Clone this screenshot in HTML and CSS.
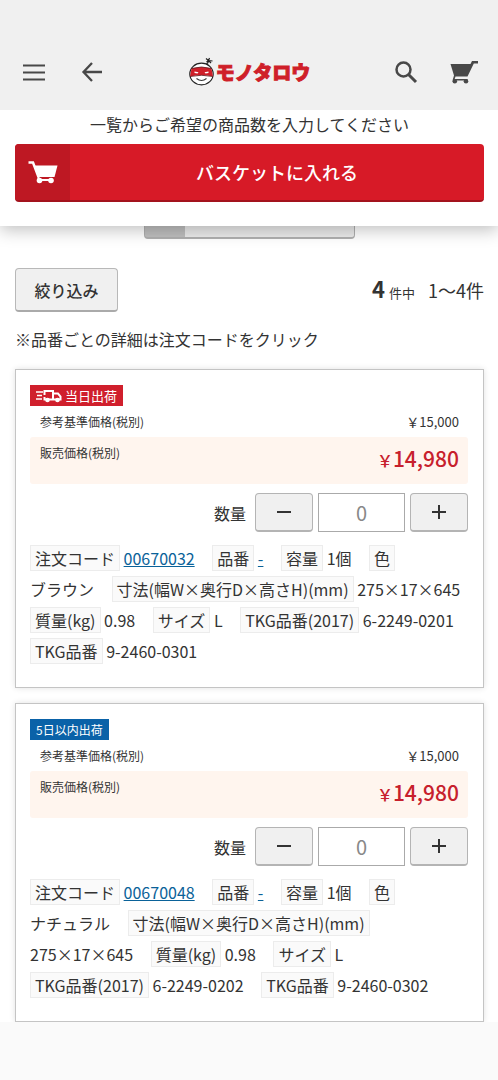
FILE: index.html
```html
<!DOCTYPE html>
<html lang="ja">
<head>
<meta charset="utf-8">
<meta name="viewport" content="width=device-width, initial-scale=1">
<title>モノタロウ</title>
<link rel="stylesheet" href="styles.css">
</head>
<body>
<header class="header">
  <div class="header-side">
    <button class="icon-button" type="button" aria-label="メニュー">
      <svg width="24" height="24" viewBox="0 0 24 24"><path d="M1 5.500H23M1 12.500H23M1 19.500H23" stroke="#484848" stroke-width="2.200" fill="none"/></svg>
    </button>
    <button class="icon-button" type="button" aria-label="戻る">
      <svg width="24" height="24" viewBox="0 0 24 24"><path d="M22 12H3.500M12 3L3.500 12L12 21" stroke="#484848" stroke-width="2.300" fill="none"/></svg>
    </button>
  </div>
  <a class="logo" href="#">
    <svg width="28" height="32" viewBox="0 0 28 32" aria-hidden="true">
      <ellipse cx="13.500" cy="18" rx="11.700" ry="10.800" fill="#fff" stroke="#222" stroke-width="1.200"/>
      <path d="M3.500 12.500Q13.500 9.500 23.500 12.500L25 20.500Q13.500 18 2 20.500Z" fill="#cf1f29"/>
      <path d="M6.500 15.500L10.500 16.300L9.500 17.500L6.500 17ZM16.500 16.300L20.500 15.500L20.500 17L17.500 17.500Z" fill="#fff"/>
      <path d="M3.500 12.500Q13.500 9.500 23.500 12.500M2 20.500Q13.500 18 25 20.500" fill="none" stroke="#5a1a1e" stroke-width=".800"/>
      <path d="M8.500 22.500Q13.500 26.500 18.500 22.500" fill="none" stroke="#333" stroke-width="1.100"/>
      <path d="M18.500 8Q20.500 7 20.500 4.500M18 2.500L20.500 4.500L18.500 6M20.500 4.500L21.500 2M20.500 4.500L24.500 5M20.500 4.500L23 7" fill="none" stroke="#222" stroke-width="1.200"/>
    </svg>
    <span class="logo-text">モノタロウ</span>
  </a>
  <div class="header-side">
    <button class="icon-button" type="button" aria-label="検索">
      <svg width="24" height="24" viewBox="0 0 24 24"><circle cx="9.500" cy="9.500" r="7" fill="none" stroke="#484848" stroke-width="2.500"/><path d="M14.500 14.500L22 22" stroke="#484848" stroke-width="3"/></svg>
    </button>
    <button class="icon-button" type="button" aria-label="バスケット">
      <svg width="28" height="24" viewBox="0 0 28 24"><path d="M.500 4H20.500L22 1H28V3.500H23.800L17.500 16.500H5.500L4.700 19H17.500V20.500H2.500L4 15.500Z" fill="#484848"/><circle cx="4.800" cy="21.300" r="2.300" fill="#484848"/><circle cx="16" cy="21.300" r="2.300" fill="#484848"/></svg>
    </button>
  </div>
</header>

<section class="basket-bar">
  <p class="basket-note">一覧からご希望の商品数を入力してください</p>
  <button class="basket-button" type="button">
    <span class="basket-icon">
      <svg width="30" height="24" viewBox="0 0 30 24"><path d="M.500 2.500H5L10.500 17" fill="none" stroke="#fff" stroke-width="2.500"/><path d="M6 5.500H29.500L26.500 17H10Z" fill="#fff"/><path d="M10.500 16V20H24" fill="none" stroke="#fff" stroke-width="2"/><circle cx="11.500" cy="20.500" r="2.800" fill="#fff"/><circle cx="23" cy="20.500" r="2.800" fill="#fff"/></svg>
    </span>
    <span class="basket-label">バスケットに入れる</span>
  </button>
</section>

<main class="content">
  <button class="under-button" type="button" aria-label="開く"></button>
  <div class="list-head">
    <button class="filter-button" type="button">絞り込み</button>
    <p class="count"><strong class="count-total">4</strong><span class="count-unit">件中</span><span>1〜4件</span></p>
  </div>
  <p class="list-note">※品番ごとの詳細は注文コードをクリック</p>

  <article class="card">
    <p class="badge badge-today">
      <svg width="26" height="14" viewBox="0 0 26 14" aria-hidden="true"><path d="M0 3H7M1 6.500H6M0 10H6" stroke="#fff" stroke-width="1.500"/><path d="M8.500 6V2H17V10.500H8.500V8M17 4.500H22L24.500 7.500V10.500H17" fill="none" stroke="#fff" stroke-width="2"/><circle cx="11.500" cy="11" r="2.300" fill="#fff"/><circle cx="21.500" cy="11" r="2.300" fill="#fff"/></svg>
      当日出荷
    </p>
    <div class="price-row"><span>参考基準価格(税別)</span><span class="list-price">&#65509;15,000</span></div>
    <div class="price-row sale-row"><span>販売価格(税別)</span><span class="sale-price"><span class="yen">&#65509;</span>14,980</span></div>
    <div class="quantity">
      <label class="quantity-label" for="qty-1">数量</label>
      <button class="step-button" type="button" aria-label="減らす"><svg width="16" height="16" viewBox="0 0 16 16"><path d="M1 8H15" stroke="#333" stroke-width="2"/></svg></button>
      <input class="quantity-input" id="qty-1" type="text" inputmode="numeric" placeholder="0">
      <button class="step-button" type="button" aria-label="増やす"><svg width="16" height="16" viewBox="0 0 16 16"><path d="M1 8H15M8 1V15" stroke="#333" stroke-width="2"/></svg></button>
    </div>
    <div class="specs">
      <span class="term">注文コード</span> <span class="value"><a href="#">00670032</a></span>
      <span class="term">品番</span> <span class="value"><a href="#">-</a></span>
      <span class="term">容量</span> <span class="value">1個</span>
      <span class="term">色</span> <span class="value">ブラウン</span>
      <span class="term">寸法(幅W×奥行D×高さH)(mm)</span> <span class="value">275×17×645</span>
      <span class="term">質量(kg)</span> <span class="value">0.98</span>
      <span class="term">サイズ</span> <span class="value">L</span>
      <span class="term">TKG品番(2017)</span> <span class="value">6-2249-0201</span>
      <span class="term">TKG品番</span> <span class="value">9-2460-0301</span>
    </div>
  </article>

  <article class="card">
    <p class="badge badge-days">5日以内出荷</p>
    <div class="price-row"><span>参考基準価格(税別)</span><span class="list-price">&#65509;15,000</span></div>
    <div class="price-row sale-row"><span>販売価格(税別)</span><span class="sale-price"><span class="yen">&#65509;</span>14,980</span></div>
    <div class="quantity">
      <label class="quantity-label" for="qty-2">数量</label>
      <button class="step-button" type="button" aria-label="減らす"><svg width="16" height="16" viewBox="0 0 16 16"><path d="M1 8H15" stroke="#333" stroke-width="2"/></svg></button>
      <input class="quantity-input" id="qty-2" type="text" inputmode="numeric" placeholder="0">
      <button class="step-button" type="button" aria-label="増やす"><svg width="16" height="16" viewBox="0 0 16 16"><path d="M1 8H15M8 1V15" stroke="#333" stroke-width="2"/></svg></button>
    </div>
    <div class="specs">
      <span class="term">注文コード</span> <span class="value"><a href="#">00670048</a></span>
      <span class="term">品番</span> <span class="value"><a href="#">-</a></span>
      <span class="term">容量</span> <span class="value">1個</span>
      <span class="term">色</span> <span class="value">ナチュラル</span>
      <span class="term">寸法(幅W×奥行D×高さH)(mm)</span> <span class="value">275×17×645</span>
      <span class="term">質量(kg)</span> <span class="value">0.98</span>
      <span class="term">サイズ</span> <span class="value">L</span>
      <span class="term">TKG品番(2017)</span> <span class="value">6-2249-0202</span>
      <span class="term">TKG品番</span> <span class="value">9-2460-0302</span>
    </div>
  </article>
</main>
</body>
</html>
```
FILE: styles.css
```css
* {
  box-sizing: border-box;
}

body {
  margin: 0;
  background: #fafafa;
  color: #333;
  font: 16px/24px "Noto Sans CJK JP", sans-serif;
}

p {
  margin: 0;
}

button,
input {
  font: inherit;
  color: inherit;
  margin: 0;
  padding: 0;
}

svg {
  display: block;
}

.header {
  position: relative;
  z-index: 2;
  display: flex;
  justify-content: space-between;
  align-items: center;
  padding: 56px 20px 22px;
  background: #f0f0f0;
}

.header-side {
  display: flex;
  gap: 30px;
}

.icon-button {
  display: flex;
  justify-content: center;
  align-items: center;
  width: 28px;
  height: 32px;
  border: 0;
  background: none;
}

.logo {
  display: flex;
  align-items: center;
  text-decoration: none;
}

.logo-text {
  color: #cf1f29;
  font-size: 19px;
  font-weight: 900;
  -webkit-text-stroke: 1px #cf1f29;
}

.basket-bar {
  position: relative;
  z-index: 1;
  padding: 2px 14px 24px 15px;
  background: #fff;
  box-shadow: 0 4px 16px rgba(0, 0, 0, 0.25);
}

.basket-note {
  text-align: center;
}

.basket-button {
  display: flex;
  width: 100%;
  height: 58px;
  margin-top: 8px;
  border: 0;
  border-bottom: 2px solid #a3131d;
  border-radius: 4px;
  background: #d71a27;
  color: #fff;
  font-size: 18px;
  font-weight: 500;
  overflow: hidden;
}

.basket-icon {
  display: flex;
  justify-content: center;
  align-items: center;
  align-self: stretch;
  width: 55px;
  background: #be1823;
}

.basket-label {
  flex: 1;
  align-self: center;
}

.content {
  padding: 0 14px 0 15px;
  background: #fff;
}

.under-button {
  display: block;
  width: 45%;
  height: 40px;
  margin: -27px auto 0;
  border: 1px solid #b0b0b0;
  border-bottom-width: 2px;
  border-radius: 4px;
  background: linear-gradient(to right, #bfbfbf 40px, #ebebeb 40px);
}

.list-head {
  display: flex;
  justify-content: space-between;
  align-items: center;
  margin-top: 29px;
}

.filter-button {
  width: 103px;
  height: 44px;
  border: 1px solid #b8b8b8;
  border-bottom: 2px solid #aaa;
  border-radius: 4px;
  background: #f0f0f0;
  font-weight: 500;
}

.count {
  font-size: 18px;
}

.count-total {
  font-size: 22px;
  font-weight: 700;
}

.count-unit {
  margin: 0 13px 0 4px;
  font-size: 13px;
}

.list-note {
  margin: 15px 0 18px;
}

.card {
  margin-bottom: 15px;
  padding: 15px 15px 20px 14px;
  border: 1px solid #c4c4c4;
  background: #fff;
  box-shadow: 0 0 6px rgba(0, 0, 0, 0.12);
}

.card:last-child {
  margin-bottom: 0;
}

.badge {
  display: flex;
  align-items: center;
  gap: 3px;
  width: fit-content;
  height: 21px;
  padding: 0 6px;
  color: #fff;
}

.badge-today {
  background: #d01f2c;
  font-size: 13px;
}

.badge-days {
  background: #0a62a8;
  font-size: 12px;
}

.price-row {
  display: flex;
  justify-content: space-between;
  padding: 4px 9px 3px 10px;
  font-size: 12px;
}

.list-price {
  font-size: 13px;
}

.sale-row {
  height: 47px;
  border-radius: 3px;
  background: #fff5ee;
}

.sale-price {
  padding-top: 5px;
  color: #c7202c;
  font-size: 21px;
  font-weight: 500;
}

.yen {
  font-size: 16px;
}

.quantity {
  display: flex;
  justify-content: flex-end;
  align-items: center;
  gap: 5px;
  margin: 9px 0 11px;
}

.quantity-label {
  margin-right: 4px;
}

.step-button {
  display: flex;
  justify-content: center;
  align-items: center;
  width: 58px;
  height: 39px;
  border: 1px solid #b4b4b4;
  border-bottom-width: 2px;
  border-radius: 4px;
  background: #f0f0f0;
}

.quantity-input {
  width: 87px;
  height: 39px;
  border: 1px solid #aaa;
  border-radius: 0;
  background: #fff;
  font-size: 20px;
  text-align: center;
}

.quantity-input::placeholder {
  color: #888;
  opacity: 1;
}

.specs {
  margin-right: -7px;
  line-height: 31px;
}

.term {
  padding: 0 4px;
  border: 1px solid #ececec;
  background: #fafafa;
  line-height: 24px;
  white-space: nowrap;
}

.value {
  margin-right: 14px;
  white-space: nowrap;
}

.specs a {
  color: #0a6299;
}
```
